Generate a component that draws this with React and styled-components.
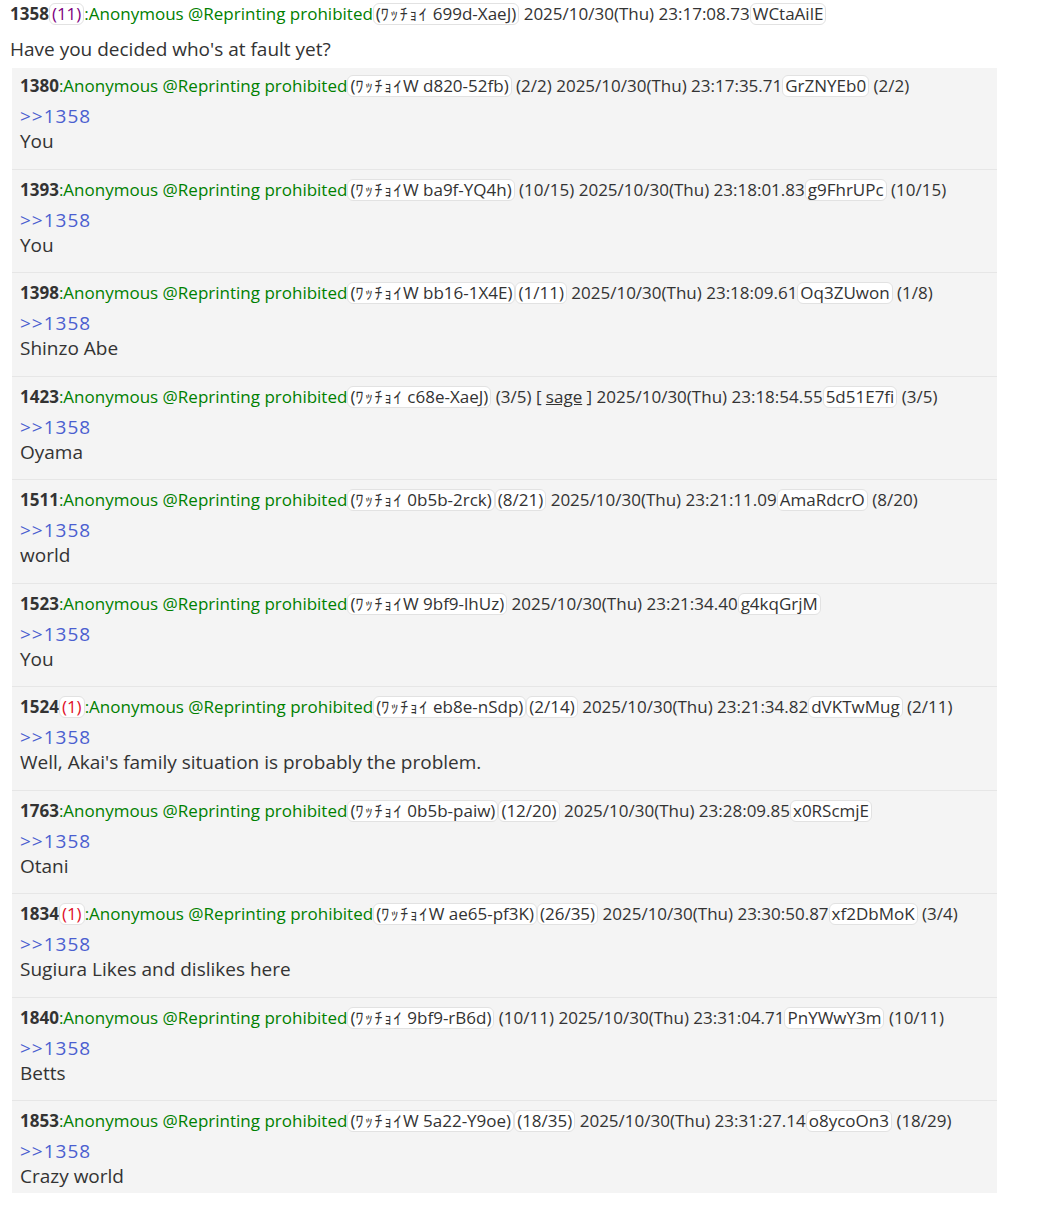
import React from "react";
import styled, { createGlobalStyle } from "styled-components";

const GlobalStyle = createGlobalStyle`
  body {
    margin: 0;
    background: #fff;
    font-family: "Open Sans", "Noto Sans CJK JP", sans-serif;
    color: #333;
  }
`;

const Page = styled.div`
  padding: 2px 10px 0;
`;

const Header = styled.div`
  font-size: 17px;
  line-height: 24px;
  white-space: nowrap;
  display: flex;
  align-items: center;
`;

const Num = styled.span`
  font-weight: 700;
  color: #333;
`;

const Name = styled.span`
  color: #008000;
`;

const Plain = styled.span`
  white-space: pre;
`;

const Badge = styled.span`
  display: inline-block;
  background: #fff;
  border: 1px solid #e2e2e2;
  border-radius: 6px;
  padding: 0 2px;
  line-height: 20px;
  color: ${({ $color }) => $color || "#333"};
`;

const Kana = styled.span`
  font-size: 16px;
  letter-spacing: 1.5px;
`;

const Sage = styled.span`
  text-decoration: underline;
`;

const TopBody = styled.div`
  font-size: 19px;
  line-height: 25px;
  margin: 11px 0 6px;
`;

const List = styled.div`
  margin-left: 2px;
  width: 985px;
  background: #f4f4f4;
`;

const Reply = styled.div`
  padding: ${({ $first }) => ($first ? 6 : 8)}px 8px 4px;
  margin-bottom: ${({ $last }) => ($last ? 0 : 10.5)}px;
  border-top: ${({ $first }) => ($first ? "none" : "1px solid #e6e6e6")};
`;

const Anchor = styled.div`
  margin-top: 6px;
  font-size: 19px;
  line-height: 25px;
  color: #4b5fd0;
  letter-spacing: 1px;
`;

const Text = styled.div`
  font-size: 19px;
  line-height: 25px;
`;

const replies = [
  { no: 1380, w: "ﾜｯﾁｮｲW", wid: "d820-52fb", wc: "(2/2)", date: "2025/10/30(Thu) 23:17:35.71", id: "GrZNYEb0", ic: "(2/2)", text: "You" },
  { no: 1393, w: "ﾜｯﾁｮｲW", wid: "ba9f-YQ4h", wc: "(10/15)", date: "2025/10/30(Thu) 23:18:01.83", id: "g9FhrUPc", ic: "(10/15)", text: "You" },
  { no: 1398, w: "ﾜｯﾁｮｲW", wid: "bb16-1X4E", wc: "(1/11)", wb: true, date: "2025/10/30(Thu) 23:18:09.61", id: "Oq3ZUwon", ic: "(1/8)", text: "Shinzo Abe" },
  { no: 1423, w: "ﾜｯﾁｮｲ", wid: "c68e-XaeJ", wc: "(3/5)", sage: true, date: "2025/10/30(Thu) 23:18:54.55", id: "5d51E7fi", ic: "(3/5)", text: "Oyama" },
  { no: 1511, w: "ﾜｯﾁｮｲ", wid: "0b5b-2rck", wc: "(8/21)", wb: true, date: "2025/10/30(Thu) 23:21:11.09", id: "AmaRdcrO", ic: "(8/20)", text: "world" },
  { no: 1523, w: "ﾜｯﾁｮｲW", wid: "9bf9-lhUz", date: "2025/10/30(Thu) 23:21:34.40", id: "g4kqGrjM", text: "You" },
  { no: 1524, refs: "(1)", w: "ﾜｯﾁｮｲ", wid: "eb8e-nSdp", wc: "(2/14)", wb: true, date: "2025/10/30(Thu) 23:21:34.82", id: "dVKTwMug", ic: "(2/11)", text: "Well, Akai's family situation is probably the problem." },
  { no: 1763, w: "ﾜｯﾁｮｲ", wid: "0b5b-paiw", wc: "(12/20)", wb: true, date: "2025/10/30(Thu) 23:28:09.85", id: "x0RScmjE", text: "Otani" },
  { no: 1834, refs: "(1)", w: "ﾜｯﾁｮｲW", wid: "ae65-pf3K", wc: "(26/35)", wb: true, date: "2025/10/30(Thu) 23:30:50.87", id: "xf2DbMoK", ic: "(3/4)", text: "Sugiura Likes and dislikes here" },
  { no: 1840, w: "ﾜｯﾁｮｲ", wid: "9bf9-rB6d", wc: "(10/11)", date: "2025/10/30(Thu) 23:31:04.71", id: "PnYWwY3m", ic: "(10/11)", text: "Betts" },
  { no: 1853, w: "ﾜｯﾁｮｲW", wid: "5a22-Y9oe", wc: "(18/35)", wb: true, date: "2025/10/30(Thu) 23:31:27.14", id: "o8ycoOn3", ic: "(18/29)", text: "Crazy world" },
];

const PostHeader = ({ p, refColor }) => (
  <Header>
    <Num>{p.no}</Num>
    {p.refs && <Badge $color={refColor}>{p.refs}</Badge>}
    <Name>:Anonymous @Reprinting prohibited</Name>
    <Badge>
      (<Kana>{p.w.replace("W", "")}</Kana>{p.w.endsWith("W") ? "W" : ""} {p.wid})
    </Badge>
    {p.wc && (p.wb ? <><Badge>{p.wc}</Badge><Plain> </Plain></> : <Plain> {p.wc} </Plain>)}
    {!p.wc && <Plain> </Plain>}
    {p.sage && <Plain>[ <Sage>sage</Sage> ] </Plain>}
    <Plain>{p.date}</Plain>
    <Badge>{p.id}</Badge>
    {p.ic && <Plain> {p.ic}</Plain>}
  </Header>
);

export default function App() {
  const top = { no: 1358, refs: "(11)", w: "ﾜｯﾁｮｲ", wid: "699d-XaeJ", date: "2025/10/30(Thu) 23:17:08.73", id: "WCtaAilE" };
  return (
    <Page>
      <GlobalStyle />
      <PostHeader p={top} refColor="#800080" />
      <TopBody>Have you decided who's at fault yet?</TopBody>
      <List>
        {replies.map((r, i) => (
          <Reply key={r.no} $first={i === 0} $last={i === replies.length - 1}>
            <PostHeader p={r} refColor="#e0102a" />
            <Anchor>&gt;&gt;1358</Anchor>
            <Text>{r.text}</Text>
          </Reply>
        ))}
      </List>
    </Page>
  );
}
